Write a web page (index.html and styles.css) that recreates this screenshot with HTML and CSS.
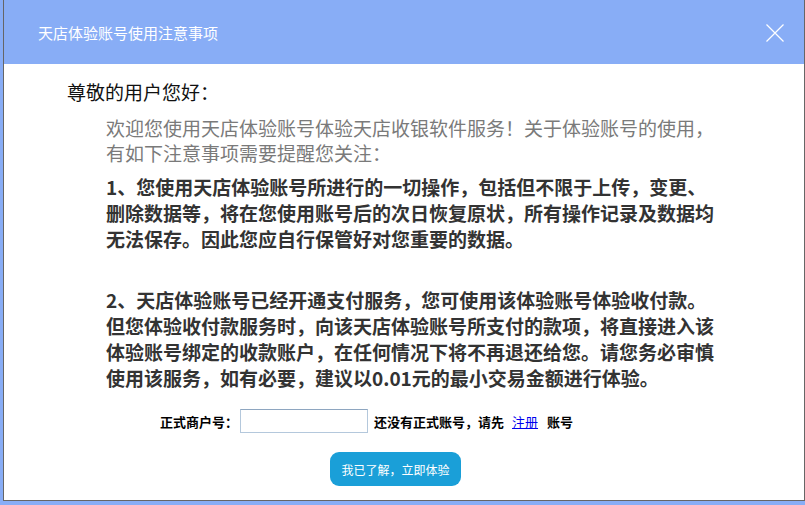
FILE: index.html
```html
<!DOCTYPE html>
<html lang="zh-CN">
<head>
<meta charset="utf-8">
<title>天店体验账号使用注意事项</title>
<link rel="stylesheet" href="styles.css">
</head>
<body>
<div class="dialog">
  <div class="dialog-header">
    <span class="dialog-title">天店体验账号使用注意事项</span>
    <span class="dialog-close" aria-label="关闭">
      <svg width="18" height="18" viewBox="0 0 18 18"><path d="M0.5 0.5 L17.5 17.5 M17.5 0.5 L0.5 17.5" stroke="#fff" stroke-width="1.2" fill="none"/></svg>
    </span>
  </div>
  <div class="dialog-body">
    <p class="greeting">尊敬的用户您好：</p>
    <div class="notice">
      <p class="intro">欢迎您使用天店体验账号体验天店收银软件服务！关于体验账号的使用，有如下注意事项需要提醒您关注：</p>
      <p class="item">1、您使用天店体验账号所进行的一切操作，包括但不限于上传，变更、删除数据等，将在您使用账号后的次日恢复原状，所有操作记录及数据均无法保存。因此您应自行保管好对您重要的数据。</p>
      <p class="item item-second">2、天店体验账号已经开通支付服务，您可使用该体验账号体验收付款。但您体验收付款服务时，向该天店体验账号所支付的款项，将直接进入该体验账号绑定的收款账户，在任何情况下将不再退还给您。请您务必审慎使用该服务，如有必要，建议以0.01元的最小交易金额进行体验。</p>
    </div>
    <div class="form-row">
      <label class="form-label" for="merchant">正式商户号：</label>
      <input class="form-input" id="merchant" type="text">
      <span class="form-hint">还没有正式账号，请先</span>
      <a class="form-link" href="#">注册</a>
      <span class="form-hint">账号</span>
    </div>
    <div class="actions">
      <button class="btn-primary" type="button">我已了解，立即体验</button>
    </div>
  </div>
</div>
</body>
</html>
```
FILE: styles.css
```css
html, body {
  margin: 0;
  padding: 0;
}
body {
  background: #88adf6;
  width: 805px;
  height: 505px;
  overflow: hidden;
  font-family: "Noto Sans CJK SC", "Noto Sans", sans-serif;
}
.dialog {
  margin-left: 3px;
  margin-top: -1px;
  width: 800px;
  height: 500px;
  border: 1px solid #666;
  background: #fff;
}
.dialog-header {
  height: 64px;
  background: #88adf6;
  display: flex;
  align-items: center;
  justify-content: space-between;
  padding: 0 20px 0 34px;
}
.dialog-title {
  color: #fff;
  font-size: 15px;
  line-height: 20px;
  margin-top: 1px;
}
.dialog-close {
  display: flex;
  width: 18px;
  height: 18px;
  margin-top: 1px;
}
.dialog-body {
  padding-top: 15px;
}
.greeting {
  margin: 0;
  padding-left: 63px;
  font-size: 19px;
  line-height: 26px;
  color: #111;
}
.notice {
  margin-left: 102px;
  width: 612px;
  font-size: 19px;
}
.intro {
  margin: 10px 0 0;
  line-height: 25px;
  color: #7a7a7a;
}
.item {
  margin: 9px 0 0;
  line-height: 26px;
  font-weight: bold;
  color: #333;
}
.item-second {
  margin-top: 35px;
}
.form-row {
  display: flex;
  align-items: center;
  margin-top: 18px;
  padding-left: 156px;
  font-size: 13px;
  font-weight: bold;
  color: #000;
  height: 24px;
}
.form-label {
  margin-right: 2px;
}
.form-input {
  box-sizing: border-box;
  width: 128px;
  height: 24px;
  margin: 0 6px 0 0;
  padding: 0 3px;
  border: 1px solid #b4c8dc;
  border-top-color: #8ea6c0;
  background: #fff;
  font-size: 13px;
}
.form-link {
  margin: 0 9px 0 8px;
  color: #0000ee;
  font-weight: normal;
  text-decoration: underline;
}
.actions {
  display: flex;
  margin-top: 19px;
  padding-left: 326px;
}
.btn-primary {
  width: 131px;
  height: 34px;
  border: none;
  border-radius: 9px;
  background: #1a9fd8;
  color: #fff;
  font-family: "Noto Sans CJK SC", "Noto Sans", sans-serif;
  font-size: 12px;
  padding: 0;
}
```
